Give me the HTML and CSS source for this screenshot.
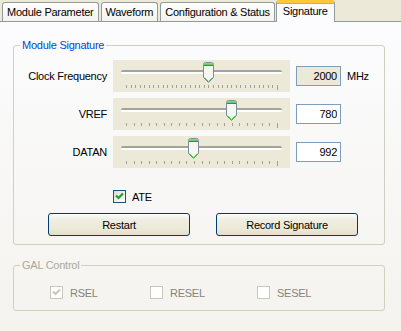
FILE: index.html
```html
<!DOCTYPE html>
<html lang="en">
<head>
  <meta charset="UTF-8">
  <title>Signature</title>
  <link rel="stylesheet" href="styles.css">
</head>
<body>

  <!-- Tab strip -->
  <div class="tabs">
    <div class="tab">Module Parameter</div>
    <div class="tab">Waveform</div>
    <div class="tab">Configuration &amp; Status</div>
    <div class="tab active">Signature</div>
  </div>

  <div class="panel">
    <fieldset class="group">
      <legend>Module Signature</legend>

      <div class="rows">
        <span class="row-label">Clock Frequency</span>
        <div class="slider fine">
          <div class="track"></div>
          <div class="ticks"></div>
          <svg class="thumb" style="left: 90px;" width="11" height="21" viewBox="0 0 11 21">
            <path d="M0.5 2.5 Q0.5 0.5 2.5 0.5 H8.5 Q10.5 0.5 10.5 2.5 V15.5 L5.5 20.5 L0.5 15.5 Z" fill="#f6f6f3" stroke="#7d8c9b"/>
            <rect x="1" y="1" width="9" height="1.5" fill="#7be07b"/>
            <rect x="1" y="2.5" width="9" height="1.5" fill="#21a121"/>
            <path d="M1.5 15.5 L5.5 19.5 L9.5 15.5" fill="none" stroke="#5cbf5c"/>
          </svg>
        </div>
        <input class="num readonly" type="text" value="2000" readonly>
        <span class="unit">MHz</span>

        <span class="row-label">VREF</span>
        <div class="slider">
          <div class="track"></div>
          <div class="ticks"></div>
          <svg class="thumb" style="left: 113px;" width="11" height="21" viewBox="0 0 11 21">
            <path d="M0.5 2.5 Q0.5 0.5 2.5 0.5 H8.5 Q10.5 0.5 10.5 2.5 V15.5 L5.5 20.5 L0.5 15.5 Z" fill="#f6f6f3" stroke="#7d8c9b"/>
            <rect x="1" y="1" width="9" height="1.5" fill="#7be07b"/>
            <rect x="1" y="2.5" width="9" height="1.5" fill="#21a121"/>
            <path d="M1.5 15.5 L5.5 19.5 L9.5 15.5" fill="none" stroke="#5cbf5c"/>
          </svg>
        </div>
        <input class="num" type="text" value="780">
        <span class="unit"></span>

        <span class="row-label">DATAN</span>
        <div class="slider">
          <div class="track"></div>
          <div class="ticks"></div>
          <svg class="thumb" style="left: 75px;" width="11" height="21" viewBox="0 0 11 21">
            <path d="M0.5 2.5 Q0.5 0.5 2.5 0.5 H8.5 Q10.5 0.5 10.5 2.5 V15.5 L5.5 20.5 L0.5 15.5 Z" fill="#f6f6f3" stroke="#7d8c9b"/>
            <rect x="1" y="1" width="9" height="1.5" fill="#7be07b"/>
            <rect x="1" y="2.5" width="9" height="1.5" fill="#21a121"/>
            <path d="M1.5 15.5 L5.5 19.5 L9.5 15.5" fill="none" stroke="#5cbf5c"/>
          </svg>
        </div>
        <input class="num" type="text" value="992">
        <span class="unit"></span>
      </div>

      <div class="ate-row">
        <span class="check">
          <svg width="11" height="11" viewBox="0 0 11 11"><path d="M2 4.5 L4.5 7 L9 2.5" fill="none" stroke="#21a121" stroke-width="2.2"/></svg>
        </span>
        <span>ATE</span>
      </div>

      <div class="buttons">
        <button class="btn">Restart</button>
        <button class="btn">Record Signature</button>
      </div>
    </fieldset>

    <fieldset class="group disabled">
      <legend>GAL Control</legend>
      <div class="gal-row">
        <div class="gal-item">
          <span class="check off">
            <svg width="11" height="11" viewBox="0 0 11 11"><path d="M2 4.5 L4.5 7 L9 2.5" fill="none" stroke="#cac8bb" stroke-width="2.2"/></svg>
          </span>
          <span>RSEL</span>
        </div>
        <div class="gal-item">
          <span class="check off"></span>
          <span>RESEL</span>
        </div>
        <div class="gal-item">
          <span class="check off"></span>
          <span>SESEL</span>
        </div>
      </div>
    </fieldset>
  </div>

</body>
</html>
```

FILE: styles.css
```css
/* Global Styles */
* {
  margin: 0;
  padding: 0;
  box-sizing: border-box;
}

body {
  font-family: 'Liberation Sans', Arial, sans-serif;
  font-size: 11px;
  letter-spacing: -0.25px;
  color: #000;
  background-color: #ece9d8;
  width: 401px;
  height: 331px;
  overflow: hidden;
}

/* Tab strip */
.tabs {
  display: flex;
  align-items: flex-end;
  height: 21px;
  padding-left: 2px;
  gap: 2px;
}

.tab {
  height: 19px;
  padding: 0 4px;
  line-height: 18px;
  border: 1px solid #919b9c;
  border-bottom: none;
  border-radius: 3px 3px 0 0;
  background: linear-gradient(#fefefe, #f4f3ee);
  white-space: nowrap;
}

.tab.active {
  position: relative;
  z-index: 1;
  height: 22px;
  margin-left: -1px;
  margin-bottom: -1px;
  padding: 0 6px;
  line-height: 17px;
  border-top: 3px solid #ffc83c;
  background: #fcfcfe;
  box-shadow: inset 0 1px 0 #f5a33a;
}

/* Page panel */
.panel {
  height: 310px;
  border-top: 1px solid #919b9c;
  background: linear-gradient(#fcfcfe, #f4f3ee);
  padding: 17px 0 0 13px;
}

.group {
  width: 372px;
  border: 1px solid #d0d0bf;
  border-radius: 3px;
  padding: 8px 0 8px;
}

.group legend {
  margin-left: 6px;
  padding: 0 2px;
  line-height: 13px;
  color: #0046d5;
}

/* Slider rows */
.rows {
  display: grid;
  grid-template-columns: 93px 177px 45px auto;
  grid-auto-rows: 32px;
  column-gap: 6px;
  row-gap: 6px;
  align-items: center;
}

.row-label {
  text-align: right;
}

.slider {
  position: relative;
  height: 32px;
  background: #ece9d8;
  --step: 7.55px;
}

.slider.fine {
  --step: 4.576px;
}

.slider .track {
  position: absolute;
  left: 8px;
  right: 8px;
  top: 10px;
  height: 4px;
  border-top: 2px solid #a3a29b;
  background: #fff;
  border-radius: 2px;
}

.slider .ticks {
  position: absolute;
  left: 13px;
  top: 25px;
  width: 152px;
  height: 3px;
  background: repeating-linear-gradient(90deg, #a09f98 0 1px, transparent 1px var(--step));
}

.slider .ticks::after {
  content: "";
  position: absolute;
  right: 0;
  top: 0;
  width: 1px;
  height: 5px;
  background: #a09f98;
}

.slider .thumb {
  position: absolute;
  top: 2px;
  display: block;
}

.num {
  width: 45px;
  height: 20px;
  border: 1px solid #7f9db9;
  background: #fff;
  font: inherit;
  letter-spacing: inherit;
  text-align: right;
  padding-right: 3px;
  outline: none;
}

.num.readonly {
  background: #ece9d8;
}

/* ATE + buttons */
.ate-row {
  display: flex;
  align-items: center;
  gap: 6px;
  margin: 22px 0 0 99px;
  height: 13px;
}

.check {
  display: flex;
  align-items: center;
  justify-content: center;
  width: 13px;
  height: 13px;
  border: 1px solid #1c5180;
  background: linear-gradient(135deg, #dcdcd7, #fff);
}

.check.off {
  border-color: #cac8bb;
  background: #fff;
}

.buttons {
  display: flex;
  gap: 26px;
  margin: 10px 0 0 34px;
}

.btn {
  width: 142px;
  height: 23px;
  border: 1px solid #003c74;
  border-radius: 3px;
  background: linear-gradient(#fdfdfb 0%, #f0eee3 25%, #ece9d8 70%, #e2dfcf 100%);
  font: inherit;
  letter-spacing: inherit;
  color: #000;
}

/* GAL Control */
.group.disabled {
  margin-top: 14px;
  padding: 14px 0 11px;
}

.group.disabled legend {
  color: #aca899;
}

.gal-row {
  display: grid;
  grid-template-columns: 100px 107px auto;
  padding-left: 36px;
  color: #858379;
}

.gal-item {
  display: flex;
  align-items: center;
  gap: 7px;
}
```
